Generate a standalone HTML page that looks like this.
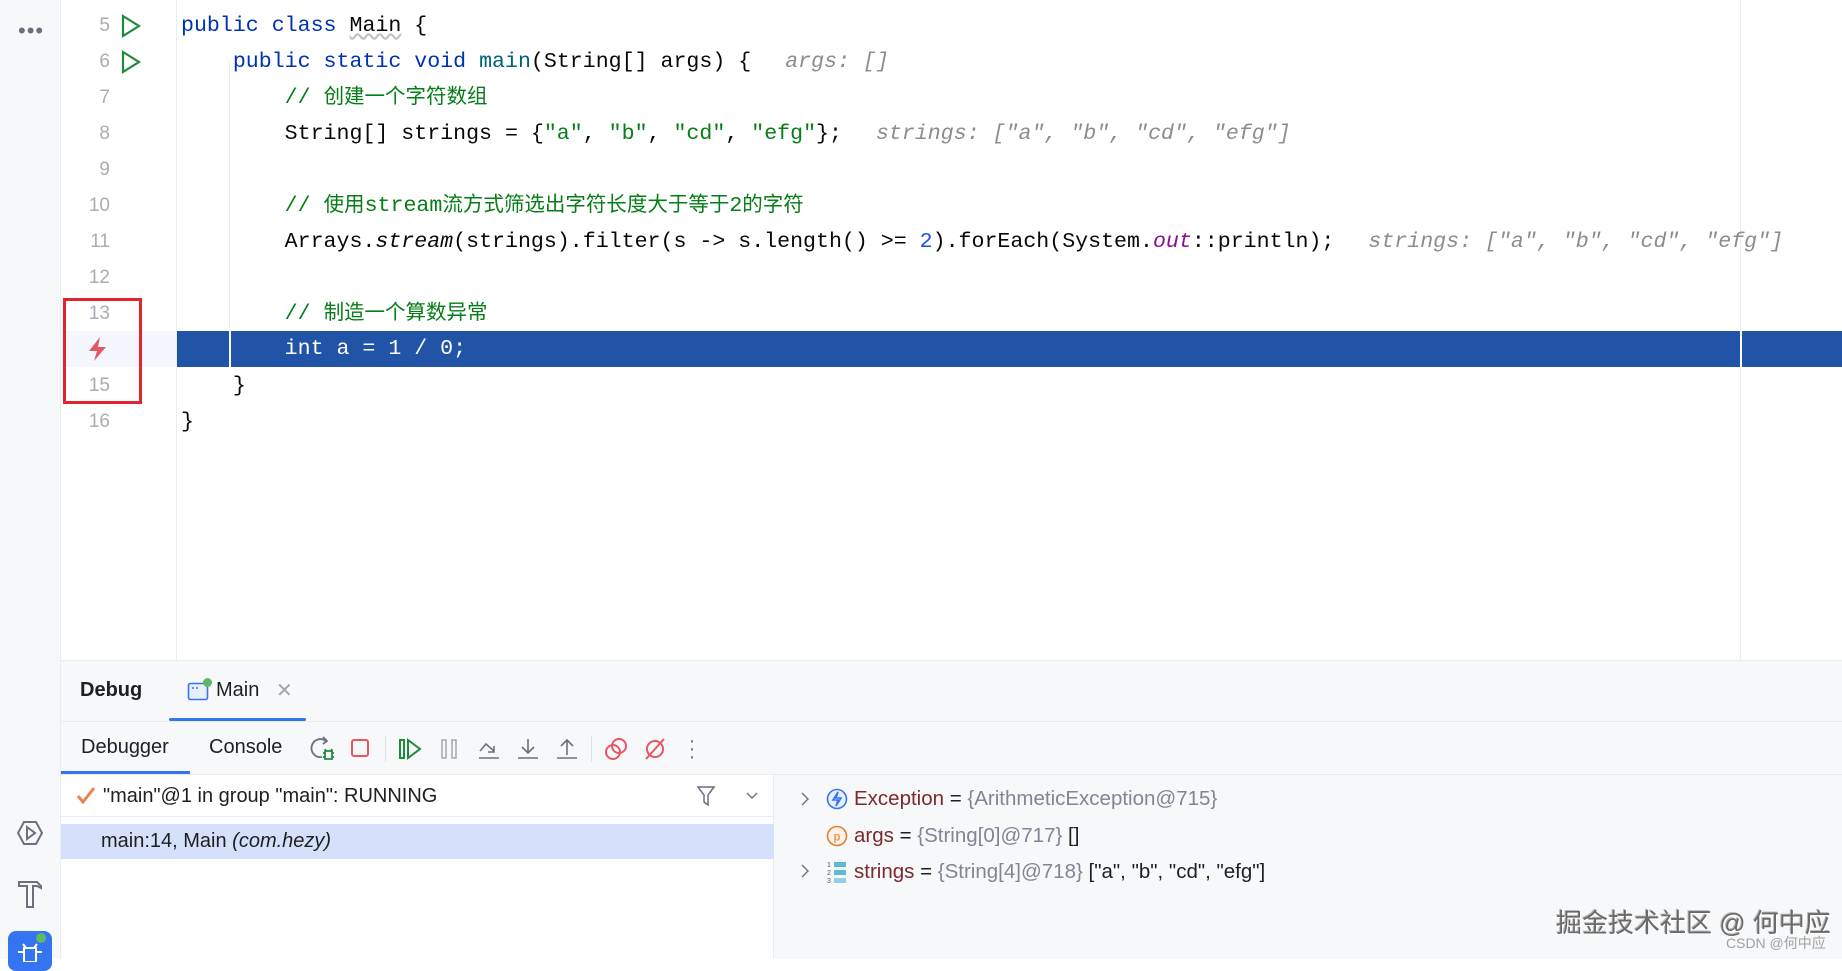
<!DOCTYPE html>
<html><head><meta charset="utf-8">
<style>
*{margin:0;padding:0;box-sizing:border-box}
body{width:1842px;height:959px;overflow:hidden;background:#fff;position:relative;font-family:"Liberation Sans","Noto Sans CJK SC",sans-serif}
.abs{position:absolute}
.code{position:absolute;left:181px;font-family:"Liberation Mono","Noto Sans CJK SC",monospace;font-size:21.6px;line-height:36px;white-space:pre;color:#080808}
.ln{position:absolute;left:62px;width:48px;text-align:right;font-size:19px;color:#a8adb5;line-height:36px}
.kw{color:#0033b3}.fn{color:#00627a}.str{color:#067d17}.cm{color:#067d17;font-family:"Liberation Mono","Noto Sans CJK SC",monospace}.num{color:#1750eb}.it{font-style:italic}.out{color:#871094;font-style:italic}
.cj{font-size:20.5px}
.hint{color:#8c8c8c;font-style:italic;margin-left:34px}
.ui{font-size:20px;color:#1e1f22;position:absolute;white-space:pre}
.vr{font-size:20.5px}
</style></head><body>
<!-- sidebar -->
<div class="abs" style="left:0;top:0;width:61px;height:959px;background:#f7f8fa;border-right:1px solid #ebecf0"></div>
<div class="abs" style="left:18px;top:18px;font-size:22px;color:#6c707e;letter-spacing:1px">•••</div>
<svg class="abs" style="left:16px;top:819px" width="28" height="28" viewBox="0 0 28 28" fill="none" stroke="#6c707e" stroke-width="2"><path d="M8 3h12l6 11-6 11H8L2 14z"/><path d="M11 8l8 6-8 6z"/></svg>
<svg class="abs" style="left:16px;top:878px" width="28" height="32" viewBox="0 0 28 32" fill="none" stroke="#6c707e" stroke-width="2"><path d="M3 4h18l4 4v2l-4-2H17v21h-6V8H3z"/></svg>
<div class="abs" style="left:8px;top:931px;width:44px;height:40px;background:#3574f0;border-radius:8px"></div>
<svg class="abs" style="left:14px;top:938px" width="32" height="24" viewBox="0 0 32 24" fill="none" stroke="#fff" stroke-width="2"><path d="M10 10h12v14H10zM4 14h6M22 14h6M12 10l-3-4M20 10l3-4"/></svg>
<div class="abs" style="left:36px;top:933px;width:10px;height:10px;border-radius:50%;background:#5fb865"></div>

<!-- gutter -->
<div class="abs" style="left:176px;top:0;width:1px;height:660px;background:#ebecf0"></div>
<div class="abs" style="left:62px;top:331px;width:114px;height:36px;background:#f4f7fd"></div>
<div class="ln" style="top:8px">5</div>
<div class="ln" style="top:44px">6</div>
<div class="ln" style="top:80px">7</div>
<div class="ln" style="top:116px">8</div>
<div class="ln" style="top:152px">9</div>
<div class="ln" style="top:188px">10</div>
<div class="ln" style="top:224px">11</div>
<div class="ln" style="top:260px">12</div>
<div class="ln" style="top:296px">13</div>
<div class="ln" style="top:368px">15</div>
<div class="ln" style="top:404px">16</div>
<svg class="abs" style="left:120px;top:14px" width="22" height="24" viewBox="0 0 22 24" fill="none" stroke="#208a3c" stroke-width="2.2"><path d="M3 2l16 10L3 22z"/></svg>
<svg class="abs" style="left:120px;top:50px" width="22" height="24" viewBox="0 0 22 24" fill="none" stroke="#208a3c" stroke-width="2.2"><path d="M3 2l16 10L3 22z"/></svg>
<svg class="abs" style="left:86px;top:336px" width="24" height="26" viewBox="0 0 24 26"><path d="M14 1L3 15h8l-3 10 12-14h-8z" fill="#e55765"/></svg>
<div class="abs" style="left:63px;top:298px;width:79px;height:106px;border:3px solid #e3232d"></div>

<!-- editor -->
<div class="abs" style="left:177px;top:331px;width:1665px;height:36px;background:#2154a6"></div>
<div class="abs" style="left:229px;top:60px;width:1px;height:270px;background:#ebecf0"></div>
<div class="abs" style="left:229px;top:331px;width:2px;height:36px;background:#fff"></div>
<div class="abs" style="left:1740px;top:0;width:1px;height:660px;background:#ebecf0"></div>
<div class="abs" style="left:1740px;top:331px;width:2px;height:36px;background:#fff"></div>

<div class="code" style="top:8px"><span class="kw">public class</span> <span style="text-decoration:underline wavy #c0c0c0">Main</span> {</div>
<div class="code" style="top:44px">    <span class="kw">public static void</span> <span class="fn">main</span>(String[] args) {<span class="hint">args: []</span></div>
<div class="code" style="top:80px">        <span class="cm">// <span class="cj">创建一个字符数组</span></span></div>
<div class="code" style="top:116px">        String[] strings = {<span class="str">"a"</span>, <span class="str">"b"</span>, <span class="str">"cd"</span>, <span class="str">"efg"</span>};<span class="hint">strings: ["a", "b", "cd", "efg"]</span></div>
<div class="code" style="top:188px">        <span class="cm">// <span class="cj">使用</span>stream<span class="cj">流方式筛选出字符长度大于等于</span>2<span class="cj">的字符</span></span></div>
<div class="code" style="top:224px">        Arrays.<span class="it">stream</span>(strings).filter(s -&gt; s.length() &gt;= <span class="num">2</span>).forEach(System.<span class="out">out</span>::println);<span class="hint">strings: ["a", "b", "cd", "efg"]</span></div>
<div class="code" style="top:296px">        <span class="cm">// <span class="cj">制造一个算数异常</span></span></div>
<div class="code" style="top:331px;color:#fff">        int a = 1 / 0;</div>
<div class="code" style="top:368px">    }</div>
<div class="code" style="top:404px">}</div>

<!-- debug panel -->
<div class="abs" style="left:61px;top:660px;width:1781px;height:299px;background:#f7f8fa;border-top:1px solid #ebecf0"></div>
<div class="ui" style="left:80px;top:679px;font-weight:bold">Debug</div>
<svg class="abs" style="left:187px;top:680px" width="24" height="22" viewBox="0 0 24 22" fill="none"><rect x="1.5" y="3.5" width="19" height="16" rx="2" stroke="#3574f0" stroke-width="1.6" fill="#e7effd"/><path d="M5 8h2M9 8h2" stroke="#3574f0" stroke-width="1.4"/></svg>
<div class="abs" style="left:203px;top:678px;width:9px;height:9px;border-radius:50%;background:#5fb865"></div>
<div class="ui" style="left:216px;top:679px">Main</div>
<div class="ui" style="left:276px;top:678px;color:#a0a4ad">✕</div>
<div class="abs" style="left:169px;top:718px;width:137px;height:3px;background:#3574f0;border-radius:2px"></div>
<div class="abs" style="left:61px;top:721px;width:1781px;height:1px;background:#ebecf0"></div>

<div class="ui" style="left:81px;top:736px">Debugger</div>
<div class="ui" style="left:209px;top:736px">Console</div>
<div class="abs" style="left:61px;top:771px;width:129px;height:3px;background:#3574f0"></div>
<div class="abs" style="left:61px;top:774px;width:1781px;height:1px;background:#ebecf0"></div>

<!-- toolbar icons -->
<svg class="abs" style="left:310px;top:736px" width="26" height="26" viewBox="0 0 26 26" fill="none" stroke-width="1.8"><path d="M16 5A9 9 0 1 0 12 21" stroke="#6c707e"/><path d="M13 1l4 4-4 3" stroke="#6c707e"/><path d="M15 15h7v8h-7zM13 17h2M22 17h2M13 21h2M22 21h2M16 15l-1-2M21 15l1-2" stroke="#208a3c"/></svg>
<div class="abs" style="left:351px;top:739px;width:18px;height:18px;border:2px solid #e55765;border-radius:3px"></div>
<div class="abs" style="left:385px;top:736px;width:1px;height:26px;background:#dfe1e5"></div>
<svg class="abs" style="left:398px;top:737px" width="26" height="24" viewBox="0 0 26 24" fill="none" stroke="#208a3c" stroke-width="2"><rect x="2" y="3" width="4" height="18"/><path d="M10 3l12 9-12 9z"/></svg>
<svg class="abs" style="left:440px;top:737px" width="20" height="24" viewBox="0 0 20 24" fill="none" stroke="#a8adb5" stroke-width="1.6"><rect x="2" y="3" width="4" height="18"/><rect x="12" y="3" width="4" height="18"/></svg>
<svg class="abs" style="left:477px;top:737px" width="24" height="24" viewBox="0 0 24 24" fill="none" stroke="#6c707e" stroke-width="1.6"><path d="M3 14L9 7l8 7M17 9v6h-6M2 21h20"/></svg>
<svg class="abs" style="left:516px;top:737px" width="24" height="24" viewBox="0 0 24 24" fill="none" stroke="#6c707e" stroke-width="1.6"><path d="M12 2v14M6 10l6 6 6-6M2 21h20"/></svg>
<svg class="abs" style="left:555px;top:737px" width="24" height="24" viewBox="0 0 24 24" fill="none" stroke="#6c707e" stroke-width="1.6"><path d="M12 18V3M6 9l6-6 6 6M2 21h20"/></svg>
<div class="abs" style="left:591px;top:736px;width:1px;height:26px;background:#dfe1e5"></div>
<svg class="abs" style="left:603px;top:736px" width="26" height="26" viewBox="0 0 26 26" fill="none" stroke="#e55765" stroke-width="2"><circle cx="10" cy="16" r="7"/><circle cx="16" cy="10" r="7"/></svg>
<svg class="abs" style="left:642px;top:736px" width="26" height="26" viewBox="0 0 26 26" fill="none" stroke="#e55765" stroke-width="2"><circle cx="13" cy="13" r="8"/><path d="M4 23L22 3"/></svg>
<div class="abs" style="left:688px;top:737px;font-size:20px;color:#6c707e;line-height:8px;width:8px;text-align:center">·<br>·<br>·</div>

<!-- threads -->
<div class="abs" style="left:61px;top:775px;width:713px;height:184px;background:#fff;border-right:1px solid #ebecf0"></div>
<div class="abs" style="left:61px;top:816px;width:713px;height:1px;background:#ebecf0"></div>
<div class="abs" style="left:61px;top:824px;width:713px;height:35px;background:#d5e1fb"></div>
<svg class="abs" style="left:76px;top:786px" width="20" height="20" viewBox="0 0 20 20" fill="none" stroke="#e8844f" stroke-width="3"><path d="M2 10l5 6L18 2"/></svg>
<div class="ui" style="left:103px;top:785px">"main"@1 in group "main": RUNNING</div>
<svg class="abs" style="left:696px;top:785px" width="20" height="22" viewBox="0 0 20 22" fill="none" stroke="#6c707e" stroke-width="1.5"><path d="M2 2h16l-6 8v10l-4-3v-7z"/></svg>
<svg class="abs" style="left:745px;top:791px" width="14" height="10" viewBox="0 0 14 10" fill="none" stroke="#6c707e" stroke-width="1.4"><path d="M2 2l5 5 5-5"/></svg>
<div class="ui" style="left:101px;top:830px">main:14, Main <i>(com.hezy)</i></div>

<!-- variables -->
<svg class="abs" style="left:800px;top:791px" width="10" height="16" viewBox="0 0 10 16" fill="none" stroke="#6c707e" stroke-width="1.4"><path d="M2 2l6 6-6 6"/></svg>
<svg class="abs" style="left:826px;top:788px" width="22" height="22" viewBox="0 0 22 22" fill="none" stroke="#3574f0" stroke-width="1.6"><circle cx="11" cy="11" r="9.5" fill="#e7effd"/><path d="M12 4l-5 8h5l-2 6 5-8h-5z"/></svg>
<div class="ui vr" style="left:854px;top:787px"><span style="color:#7c2a2a">Exception</span> = <span style="color:#818594">{ArithmeticException@715}</span></div>
<svg class="abs" style="left:826px;top:825px" width="22" height="22" viewBox="0 0 22 22" fill="none"><circle cx="11" cy="11" r="9.5" stroke="#e07d2e" stroke-width="1.6" fill="#fdf1e7"/><text x="11" y="15.5" font-size="12" text-anchor="middle" fill="#e07d2e" font-family="Liberation Sans">p</text></svg>
<div class="ui vr" style="left:854px;top:824px"><span style="color:#7c2a2a">args</span> = <span style="color:#818594">{String[0]@717}</span> []</div>
<svg class="abs" style="left:800px;top:863px" width="10" height="16" viewBox="0 0 10 16" fill="none" stroke="#6c707e" stroke-width="1.4"><path d="M2 2l6 6-6 6"/></svg>
<svg class="abs" style="left:826px;top:860px" width="22" height="24" viewBox="0 0 22 24"><text x="1" y="7" font-size="7" fill="#555" font-family="Liberation Sans">1</text><text x="1" y="15" font-size="7" fill="#555" font-family="Liberation Sans">2</text><text x="1" y="23" font-size="7" fill="#555" font-family="Liberation Sans">3</text><rect x="8" y="2" width="12" height="5" fill="#5fb8d8"/><rect x="8" y="10" width="12" height="5" fill="#5fb8d8"/><rect x="8" y="18" width="12" height="5" fill="#8fd0e6"/></svg>
<div class="ui vr" style="left:854px;top:860px"><span style="color:#7c2a2a">strings</span> = <span style="color:#818594">{String[4]@718}</span> ["a", "b", "cd", "efg"]</div>

<!-- watermark -->
<div class="abs" style="left:1556px;top:903px;font-size:26px;color:#6a6a6a;white-space:nowrap;text-shadow:1px 1px 0 #fff,-1px -1px 0 #bbb">掘金技术社区 @ 何中应</div>
<div class="abs" style="left:1726px;top:933px;font-size:14px;color:#a0a0a0;white-space:nowrap">CSDN @何中应</div>
</body></html>
